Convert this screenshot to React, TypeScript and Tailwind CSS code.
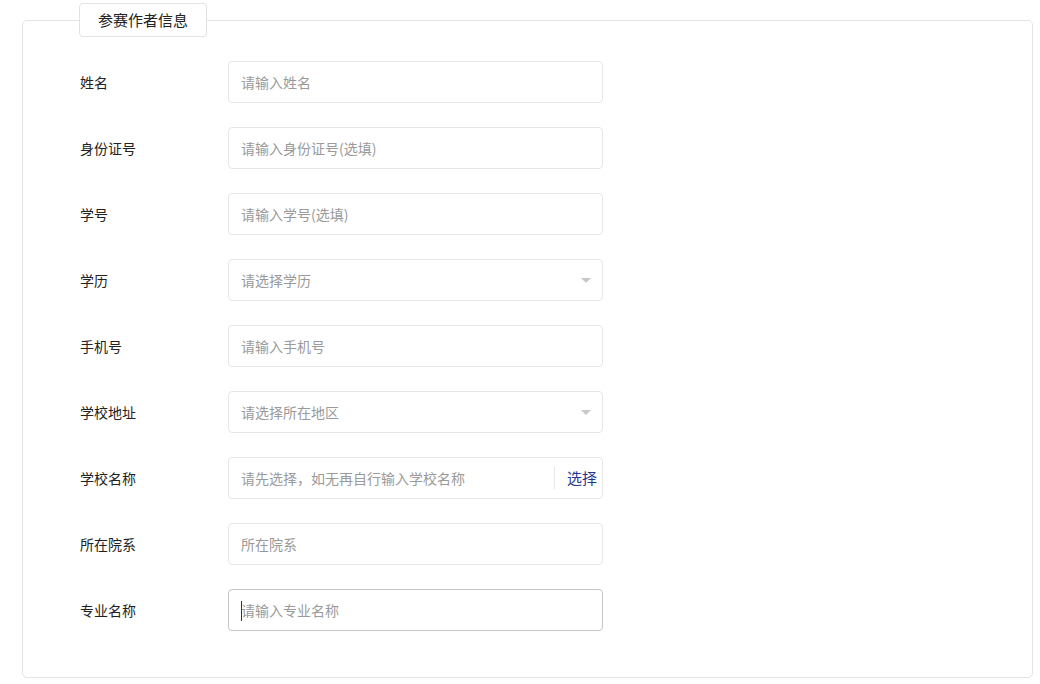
import React from "react";

const font = { fontFamily: '"Noto Sans CJK SC", "Noto Sans", sans-serif' };

type Row = { label: string; ph: string; kind?: "select" | "pick" | "focus" };

const rows: Row[] = [
  { label: "姓名", ph: "请输入姓名" },
  { label: "身份证号", ph: "请输入身份证号(选填)" },
  { label: "学号", ph: "请输入学号(选填)" },
  { label: "学历", ph: "请选择学历", kind: "select" },
  { label: "手机号", ph: "请输入手机号" },
  { label: "学校地址", ph: "请选择所在地区", kind: "select" },
  { label: "学校名称", ph: "请先选择，如无再自行输入学校名称", kind: "pick" },
  { label: "所在院系", ph: "所在院系" },
  { label: "专业名称", ph: "请输入专业名称", kind: "focus" },
];

function Field({ r }: { r: Row }) {
  const border = r.kind === "focus" ? "border-[#c4c4c4]" : "border-[#e6e6e6]";
  return (
    <div className={`relative flex h-[42px] w-[375px] items-center rounded-[4px] border bg-white ${border}`}>
      <input
        readOnly
        placeholder={r.ph}
        className="h-full min-w-0 flex-1 bg-transparent pl-[12px] text-[14px] text-[#333] outline-none placeholder:text-[#9a9a9a]"
        style={font}
      />
      {r.kind === "select" && (
        <span className="mr-[11px] h-0 w-0 border-x-[5px] border-t-[5px] border-x-transparent border-t-[#c8c8c8]" />
      )}
      {r.kind === "pick" && (
        <div className="flex h-full items-center">
          <span className="h-[22px] w-px bg-[#e6e6e6]" />
          <span className="pl-[12px] pr-[5px] text-[15px] text-[#23368c]">选择</span>
        </div>
      )}
      {r.kind === "focus" && (
        <span className="absolute left-[12px] top-[11px] h-[20px] w-px bg-[#333]" />
      )}
    </div>
  );
}

export default function App() {
  return (
    <div className="h-[684px] w-[1040px] bg-white pt-[3px] pl-[22px]" style={font}>
      <fieldset className="w-[1011px] rounded-[5px] border border-[#e4e4e4] pb-[46px]">
        <legend className="ml-[56px] flex h-[34px] items-center rounded-[4px] border border-[#e2e2e2] bg-white px-[18px] text-[15px] text-[#222]">
          参赛作者信息
        </legend>
        <div className="flex flex-col gap-[24px] pt-[24px] pl-[57px]">
          {rows.map((r) => (
            <div key={r.label} className="flex items-center">
              <div className="w-[148px] text-[14px] text-[#222]">{r.label}</div>
              <Field r={r} />
            </div>
          ))}
        </div>
      </fieldset>
    </div>
  );
}
